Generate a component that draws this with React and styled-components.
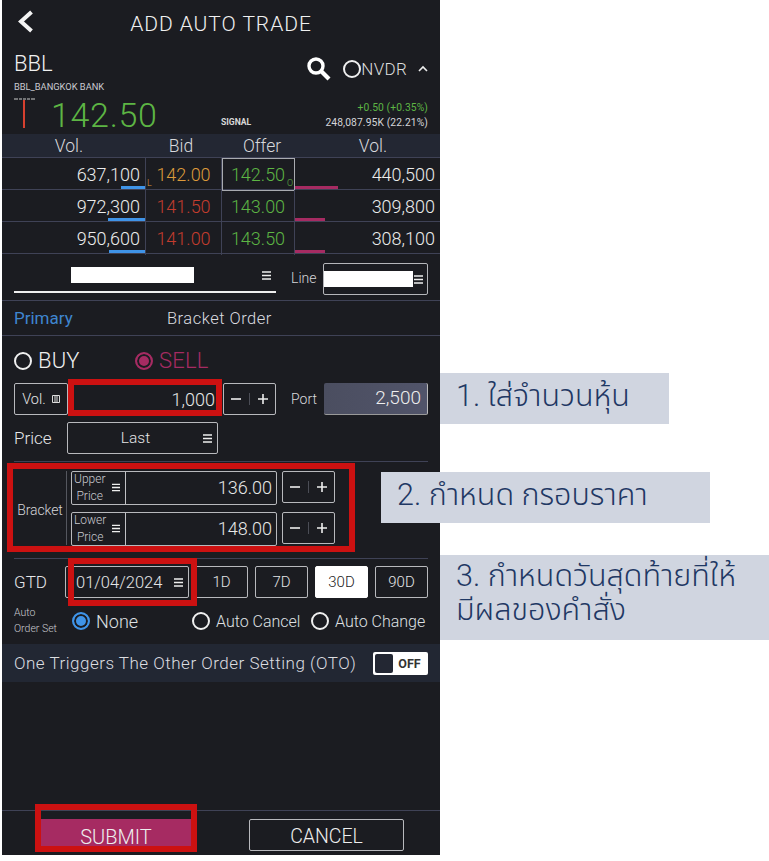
import React from "react";
import styled, { createGlobalStyle } from "styled-components";

const Global = createGlobalStyle`
  html, body { margin: 0; padding: 0; background: #fff; }
  * { box-sizing: border-box; }
`;
const font = `Roboto, "Noto Sans", "Noto Sans Thai", "DejaVu Sans", sans-serif`;
const line = "#3f4256";
const text = "#e4e5e7";
const green = "#5db544";
const pink = "#a62b62";

const Page = styled.div`position: relative; width: 769px; height: 861px; background: #fff; font-family: ${font}; font-weight: 300;`;
const Panel = styled.main`
  margin-left: 2px; width: 438px; height: 855px; background: #1b1c21; color: ${text};
  display: flex; flex-direction: column; overflow: hidden;
`;
const Header = styled.header`height: 47px; display: flex; align-items: center; position: relative; justify-content: center; flex: none;`;
const Back = styled.svg`position: absolute; left: 15px; top: 9px;`;
const Title = styled.h1`margin: 0; font-size: 21px; font-weight: 300; letter-spacing: 0.95px; color: #f0f0f0;`;
const Quote = styled.section`height: 87px; flex: none; padding: 5px 12px 0; display: flex; flex-direction: column;`;
const QuoteTop = styled.div`display: flex; justify-content: space-between; height: 46px;`;
const Sym = styled.div`font-size: 22px; line-height: 24px; color: #f0f0f0;`;
const SymName = styled.div`font-size: 9.3px; line-height: 10px; margin-top: 6px; color: #c9cad0; font-weight: 400;`;
const Tools = styled.div`display: flex; align-items: center; height: 28px; margin-top: 3px;`;
const Nvdr = styled.span`font-size: 17px; color: #ddd; letter-spacing: .3px;`;
const Ring = styled.span`
  width: ${p => p.$s || 18}px; height: ${p => p.$s || 18}px; border-radius: 50%; flex: none; display: inline-block;
  border: 2px solid ${p => p.$c || "#f0f0f0"};
  ${p => p.$on ? `background: ${p.$c}; box-shadow: inset 0 0 0 2px #1b1c21;` : ""}
`;
const QuoteBottom = styled.div`display: flex; align-items: flex-end; height: 36px;`;
const Candle = styled.svg`flex: none; margin-right: 15px; margin-bottom: 6px;`;
const Last = styled.div`font-size: 34px; line-height: 36px; color: ${green}; letter-spacing: .7px; width: 170px; margin-bottom: 1px; font-weight: 300;`;
const Signal = styled.div`font-size: 8.6px; font-weight: 700; color: #d8d8d8; margin-bottom: 7px;`;
const Stat = styled.div`margin-left: auto; text-align: right; font-size: 10.3px; line-height: 15px; color: #d4d5d8; margin-bottom: 4px; letter-spacing: .1px; font-weight: 400;`;
const Gain = styled.div`color: ${green};`;
const columns = "144px 76px 73px 145px";
const BookHead = styled.div`
  display: grid; grid-template-columns: 134px 90px 72px 142px; height: 24px; background: #232733; flex: none;
  border-bottom: 1px solid ${line}; font-size: 17.5px; color: #d8d9dd; text-align: center; line-height: 25px;
`;
const HeadRight = styled.span`padding-left: 8px;`;
const BookRow = styled.div`display: grid; grid-template-columns: ${columns}; height: 32px; flex: none; border-bottom: 1px solid ${line};`;
const VolCell = styled.div`
  position: relative; text-align: right; font-size: 18px; line-height: 33px; padding-right: 5px; color: #ececec;
  border-right: ${p => p.$left ? `1px solid ${line}` : "0"};
`;
const SellVol = styled(VolCell)`padding-right: 5px;`;
const Bar = styled.i`
  position: absolute; bottom: 2px; height: 3px; width: ${p => p.$w}px; background: ${p => p.$c};
  ${p => p.$side}: 0;
`;
const PriceCell = styled.div`
  position: relative; text-align: center; font-size: 18px; line-height: 33px; color: ${p => p.$c};
  border-right: 1px solid ${line}; font-weight: 300;
  ${p => p.$box ? "outline: 1px solid #a9abb0; outline-offset: -1px;" : ""}
`;
const Tag = styled.span`position: absolute; ${p => p.$side}: 1px; bottom: 3px; font-size: 9px; line-height: 9px; color: ${p => p.$c};`;
const Selector = styled.div`height: 47px; flex: none; border-bottom: 1px solid ${line}; display: flex; padding: 9px 12px 0;`;
const Picker = styled.div`
  width: 262px; height: 30px; border-bottom: 2px solid #eee; display: flex; align-items: center; position: relative; padding: 0 5px 3px 0;
  justify-content: flex-end;
`;
const Mask = styled.i`position: absolute; background: #fff; left: ${p => p.$l}px; top: ${p => p.$t}px; width: ${p => p.$w}px; height: ${p => p.$h}px;`;
const LineLabel = styled.span`font-size: 14px; color: #d4d5d8; margin-left: 15px; width: 32px; line-height: 30px;`;
const LineBox = styled.div`
  position: relative; width: 105px; height: 32px; border: 1px solid #b5b6ba; border-radius: 2px; display: flex; align-items: center; justify-content: flex-end; padding-right: 4px;
`;
const Tabs = styled.div`height: 35px; flex: none; border-bottom: 1px solid ${line}; display: flex; align-items: center; padding: 0 12px; font-size: 17px; font-weight: 400;`;
const TabPrimary = styled.span`color: #3f86d0; width: 153px;`;
const TabOther = styled.span`color: #dcdde0; font-size: 16.5px; letter-spacing: .5px; font-weight: 300;`;
const Form = styled.section`padding: 0 12px; flex: none; display: flex; flex-direction: column;`;
const Side = styled.div`display: flex; align-items: center; height: 47px; padding-top: 2px;`;
const SideOpt = styled.label`
  display: flex; align-items: center; gap: 6px; font-size: 22px; letter-spacing: .2px; color: ${p => p.$c}; width: ${p => p.$w}px;
`;
const Row = styled.div`display: flex; align-items: center; height: ${p => p.$h}px;`;
const Field = styled.div`
  height: ${p => p.$h || 32}px; width: ${p => p.$w}px; border: 1px solid #b8b9bd; border-radius: 2px; flex: none; display: flex; align-items: center;
  justify-content: ${p => p.$j || "center"}; font-size: ${p => p.$f || 14.5}px; color: ${text}; padding: ${p => p.$p || "0"}; gap: ${p => p.$g || 0}px;
  margin-left: ${p => p.$ml || 0}px; position: relative;
`;
const Num = styled.span`font-size: 18px; color: #e8e8e8;`;
const StepBox = styled(Field)`justify-content: space-around; padding: 0 3px; margin-left: ${p => p.$ml || 1}px;`;
const Sep = styled.i`width: 1px; height: 12px; background: #4b4d56;`;
const PortLabel = styled.span`font-size: 14px; color: #d8d9dc; margin-left: 15px; width: 33px;`;
const PortBox = styled.div`
  width: 105px; height: 32px; background: linear-gradient(90deg,#4b4e60,#51546a); border-right: 1px solid #bbb; border-bottom: 1px solid #999;
  border-radius: 2px; font-size: 19px; color: #eee; text-align: right; line-height: 29px; padding-right: 6px;
`;
const Big = styled.span`font-size: 17px; width: 53px; color: #e6e7e9;`;
const Divider = styled.hr`margin: 0; border: 0; height: 1px; background: ${line}; flex: none;`;
const BracketWrap = styled.div`display: flex; align-items: center; height: 96px; padding-bottom: 4px;`;
const BracketLabel = styled.span`font-size: 14px; width: 53px; text-align: center; color: #d4d5d8; border-right: 1px solid #55575f; height: 74px; line-height: 78px; flex: none; letter-spacing: -.1px;`;
const BracketRows = styled.div`display: flex; flex-direction: column; gap: 7px; margin-left: 4px;`;
const BracketRow = styled.div`display: flex;`;
const BracketName = styled.div`
  width: 54px; flex: none; border-right: 1px solid #c0c1c5; display: flex; align-items: center; height: 100%; padding-left: 2px; font-size: 12px; line-height: 16.5px; color: #c9cad0; text-align: center; justify-content: space-between; padding-right: 5px;
`;
const BracketValue = styled.span`flex: 1; text-align: right; padding-right: 4px; font-size: 18px; color: #e8e8e8;`;
const DayBtn = styled.button`
  width: 53px; height: 32px; margin-left: 7px; padding: 0; flex: none; font: 300 15px ${font}; border-radius: 2px;
  background: ${p => p.$on ? "#fff" : "transparent"}; color: ${p => p.$on ? "#222" : text}; border: 1px solid ${p => p.$on ? "#fff" : "#b8b9bd"};
  &:first-of-type { margin-left: 6px; }
`;
const AutoLabel = styled.div`font-size: 10.5px; line-height: 16px; width: 59px; color: #c9cad0;`;
const RadioOpt = styled.label`display: flex; align-items: center; gap: 6px; font-size: ${p => p.$f}px; width: ${p => p.$w}px; color: #dfe0e3; flex: none;`;
const Oto = styled.div`
  height: 38px; background: #222733; display: flex; align-items: center; justify-content: space-between; padding: 0 12px; flex: none;
  font-size: 17px; letter-spacing: .5px; color: #dcdde0;
`;
const Switch = styled.div`width: 55px; height: 23px; background: #fff; border-radius: 2px; padding: 2px; display: flex; align-items: center;`;
const Knob = styled.i`width: 18px; height: 19px; background: #232733; border-radius: 2px;`;
const SwitchText = styled.span`flex: 1; text-align: center; font-size: 12.5px; font-weight: 700; color: #333; letter-spacing: 0;`;
const Spacer = styled.div`flex: 1;`;
const Footer = styled.footer`height: 45px; flex: none; border-top: 1px solid ${line}; display: flex; padding-top: 8px;`;
const Submit = styled.button`
  width: 152px; height: 33px; margin-left: 39px; border: 0; background: ${pink}; color: #eee; font: 300 20px ${font}; padding: 3px 2px 0 0;
`;
const Cancel = styled.button`
  width: 155px; height: 32px; margin-left: 56px; border: 1px solid #b8b9bd; border-radius: 2px; background: transparent; color: #eee; font: 300 19.5px ${font}; padding: 2px 0 0;
`;
const Note = styled.aside`
  position: absolute; left: ${p => p.$x}px; top: ${p => p.$y}px; width: ${p => p.$w}px; height: ${p => p.$h}px;
  background: #d0d5e0; color: #1f3864; font-size: 30.5px; line-height: 34px; padding: ${p => p.$t}px 0 0 16px; font-family: ${font}; font-weight: 300;
`;
const Mark = styled.div`
  position: absolute; left: ${p => p.$x}px; top: ${p => p.$y}px; width: ${p => p.$w}px; height: ${p => p.$h}px;
  border: 6px solid #cc1111; pointer-events: none;
`;

const Menu = ({ w = 9 }) => (
  <svg width={w} height="9" viewBox="0 0 9 9" style={{ flex: "none" }}>
    <path d="M0 1h9M0 4.5h9M0 8h9" stroke="#eee" strokeWidth="1.6" />
  </svg>
);
const Stepper = ({ ml }) => (
  <StepBox $w={53} $ml={ml}>
    <svg width="10" height="10" viewBox="0 0 10 10"><path d="M0 5h10" stroke="#eee" strokeWidth="1.6" /></svg>
    <Sep />
    <svg width="10" height="10" viewBox="0 0 10 10"><path d="M0 5h10M5 0v10" stroke="#eee" strokeWidth="1.6" /></svg>
  </StepBox>
);

const rows = [
  ["637,100", 24, "142.00", "#dd9a3b", "142.50", 43, "440,500", true],
  ["972,300", 37, "141.50", "#c43c2e", "143.00", 30, "309,800"],
  ["950,600", 36, "141.00", "#c43c2e", "143.50", 30, "308,100"],
];

export default function App() {
  return (
    <Page>
      <Global />
      <Panel>
        <Header>
          <Back width="18" height="26" viewBox="0 0 18 26">
            <path d="M14.5 3 4 12.5 14.5 22" fill="none" stroke="#f4f4f4" strokeWidth="4" />
          </Back>
          <Title>ADD AUTO TRADE</Title>
        </Header>
        <Quote>
          <QuoteTop>
            <div>
              <Sym>BBL</Sym>
              <SymName>BBL_BANGKOK BANK</SymName>
            </div>
            <Tools>
              <svg width="26" height="26" viewBox="0 0 26 26" style={{ marginRight: 11 }}>
                <circle cx="10" cy="10" r="7" fill="none" stroke="#fff" strokeWidth="3.4" />
                <path d="M15 15 23 23" stroke="#fff" strokeWidth="4.2" />
              </svg>
              <Ring $s={18} />
              <Nvdr>NVDR</Nvdr>
              <svg width="10" height="8" viewBox="0 0 10 8" style={{ margin: "0 0 0 11px" }}>
                <path d="M1 6 5 2l4 4" fill="none" stroke="#eee" strokeWidth="1.6" />
              </svg>
            </Tools>
          </QuoteTop>
          <QuoteBottom>
            <Candle width="22" height="30" viewBox="0 0 22 30">
              <path d="M0 1h4M5 1h3M9 1h3M13 1h3M17 1h4" stroke="#ccc" />
              <path d="M10 2v28" stroke="#d6402f" strokeWidth="2" />
            </Candle>
            <Last>142.50</Last>
            <Signal>SIGNAL</Signal>
            <Stat>
              <Gain>+0.50 (+0.35%)</Gain>
              <div>248,087.95K (22.21%)</div>
            </Stat>
          </QuoteBottom>
        </Quote>
        <BookHead>
          <span>Vol.</span><span>Bid</span><span>Offer</span><HeadRight>Vol.</HeadRight>
        </BookHead>
        {rows.map(r => (
          <BookRow key={r[0]}>
            <VolCell $left>{r[0]}<Bar $c="#3f94e8" $w={r[1]} $side="right" /></VolCell>
            <PriceCell $c={r[3]}>{r[2]}{r[7] && <Tag $side="left" $c="#dd9a3b">L</Tag>}</PriceCell>
            <PriceCell $c={green} $box={r[7]}>{r[4]}{r[7] && <Tag $side="right" $c={green}>O</Tag>}</PriceCell>
            <SellVol>{r[6]}<Bar $c={pink} $w={r[5]} $side="left" /></SellVol>
          </BookRow>
        ))}
        <Selector>
          <Picker><Mask $l={57} $t={4} $w={123} $h={16} /><Menu /></Picker>
          <LineLabel>Line</LineLabel>
          <LineBox><Mask $l={0} $t={7} $w={89} $h={16} /><Menu /></LineBox>
        </Selector>
        <Tabs>
          <TabPrimary>Primary</TabPrimary>
          <TabOther>Bracket Order</TabOther>
        </Tabs>
        <Form>
          <Side>
            <SideOpt $c="#eee" $w={121}><Ring $s={18} />BUY</SideOpt>
            <SideOpt $c={pink} $w={100}><Ring $s={18} $c={pink} $on />SELL</SideOpt>
          </Side>
          <Row $h={32}>
            <Field $w={54} $g={6}>Vol.
              <svg width="8" height="8" viewBox="0 0 8 8"><path d="M.5.5h7v7h-7zM2 2h4M2 4h4M2 6h4" fill="none" stroke="#ddd" /></svg>
            </Field>
            <Field $w={154} $j="flex-end" $p="0 6px 0 0" style={{ borderColor: "transparent" }}><Num>1,000</Num></Field>
            <Stepper />
            <PortLabel>Port</PortLabel>
            <PortBox>2,500</PortBox>
          </Row>
          <Row $h={40} style={{ marginTop: 3 }}>
            <Big>Price</Big>
            <Field $w={151} $f={15.5} style={{ padding: "0 5px 0 0" }}>
              <span style={{ flex: 1, textAlign: "center" }}>Last</span><Menu />
            </Field>
          </Row>
          <Divider style={{ marginTop: 3 }} />
          <BracketWrap>
            <BracketLabel>Bracket</BracketLabel>
            <BracketRows>
              {[["Upper", "136.00"], ["Lower", "148.00"]].map(([n, v]) => (
                <BracketRow key={n}>
                  <Field $w={206} $h={34} $j="flex-start">
                    <BracketName><span>{n}<br />Price</span><Menu w={8} /></BracketName>
                    <BracketValue>{v}</BracketValue>
                  </Field>
                  <Stepper ml={5} />
                </BracketRow>
              ))}
            </BracketRows>
          </BracketWrap>
          <Divider />
          <Row $h={32} style={{ marginTop: 7 }}>
            <Big>GTD</Big>
            <Field $w={124} $f={16.5} $j="space-between" $p="0 5px 0 10px">01/04/2024<Menu /></Field>
            <DayBtn>1D</DayBtn>
            <DayBtn>7D</DayBtn>
            <DayBtn $on>30D</DayBtn>
            <DayBtn>90D</DayBtn>
          </Row>
          <Row $h={46}>
            <AutoLabel>Auto<br />Order Set</AutoLabel>
            <RadioOpt $f={18} $w={120}><Ring $s={18} $c="#3f94e8" $on />None</RadioOpt>
            <RadioOpt $f={16} $w={119}><Ring $s={18} />Auto Cancel</RadioOpt>
            <RadioOpt $f={16} $w={117}><Ring $s={18} />Auto Change</RadioOpt>
          </Row>
        </Form>
        <Oto>
          <span>One Triggers The Other Order Setting (OTO)</span>
          <Switch><Knob /><SwitchText>OFF</SwitchText></Switch>
        </Oto>
        <Spacer />
        <Footer>
          <Submit>SUBMIT</Submit>
          <Cancel>CANCEL</Cancel>
        </Footer>
      </Panel>
      <Mark $x={68} $y={379} $w={154} $h={37} />
      <Mark $x={7} $y={463} $w={348} $h={89} />
      <Mark $x={68} $y={558} $w={129} $h={48} />
      <Mark $x={35} $y={804} $w={162} $h={48} />
      <Note $x={440} $y={373} $w={229} $h={51} $t={6}>1. ใส่จำนวนหุ้น</Note>
      <Note $x={381} $y={472} $w={329} $h={51} $t={6}>2. กำหนด กรอบราคา</Note>
      <Note $x={440} $y={555} $w={329} $h={85} $t={4}>3. กำหนดวันสุดท้ายที่ให้<br />มีผลของคำสั่ง</Note>
    </Page>
  );
}
